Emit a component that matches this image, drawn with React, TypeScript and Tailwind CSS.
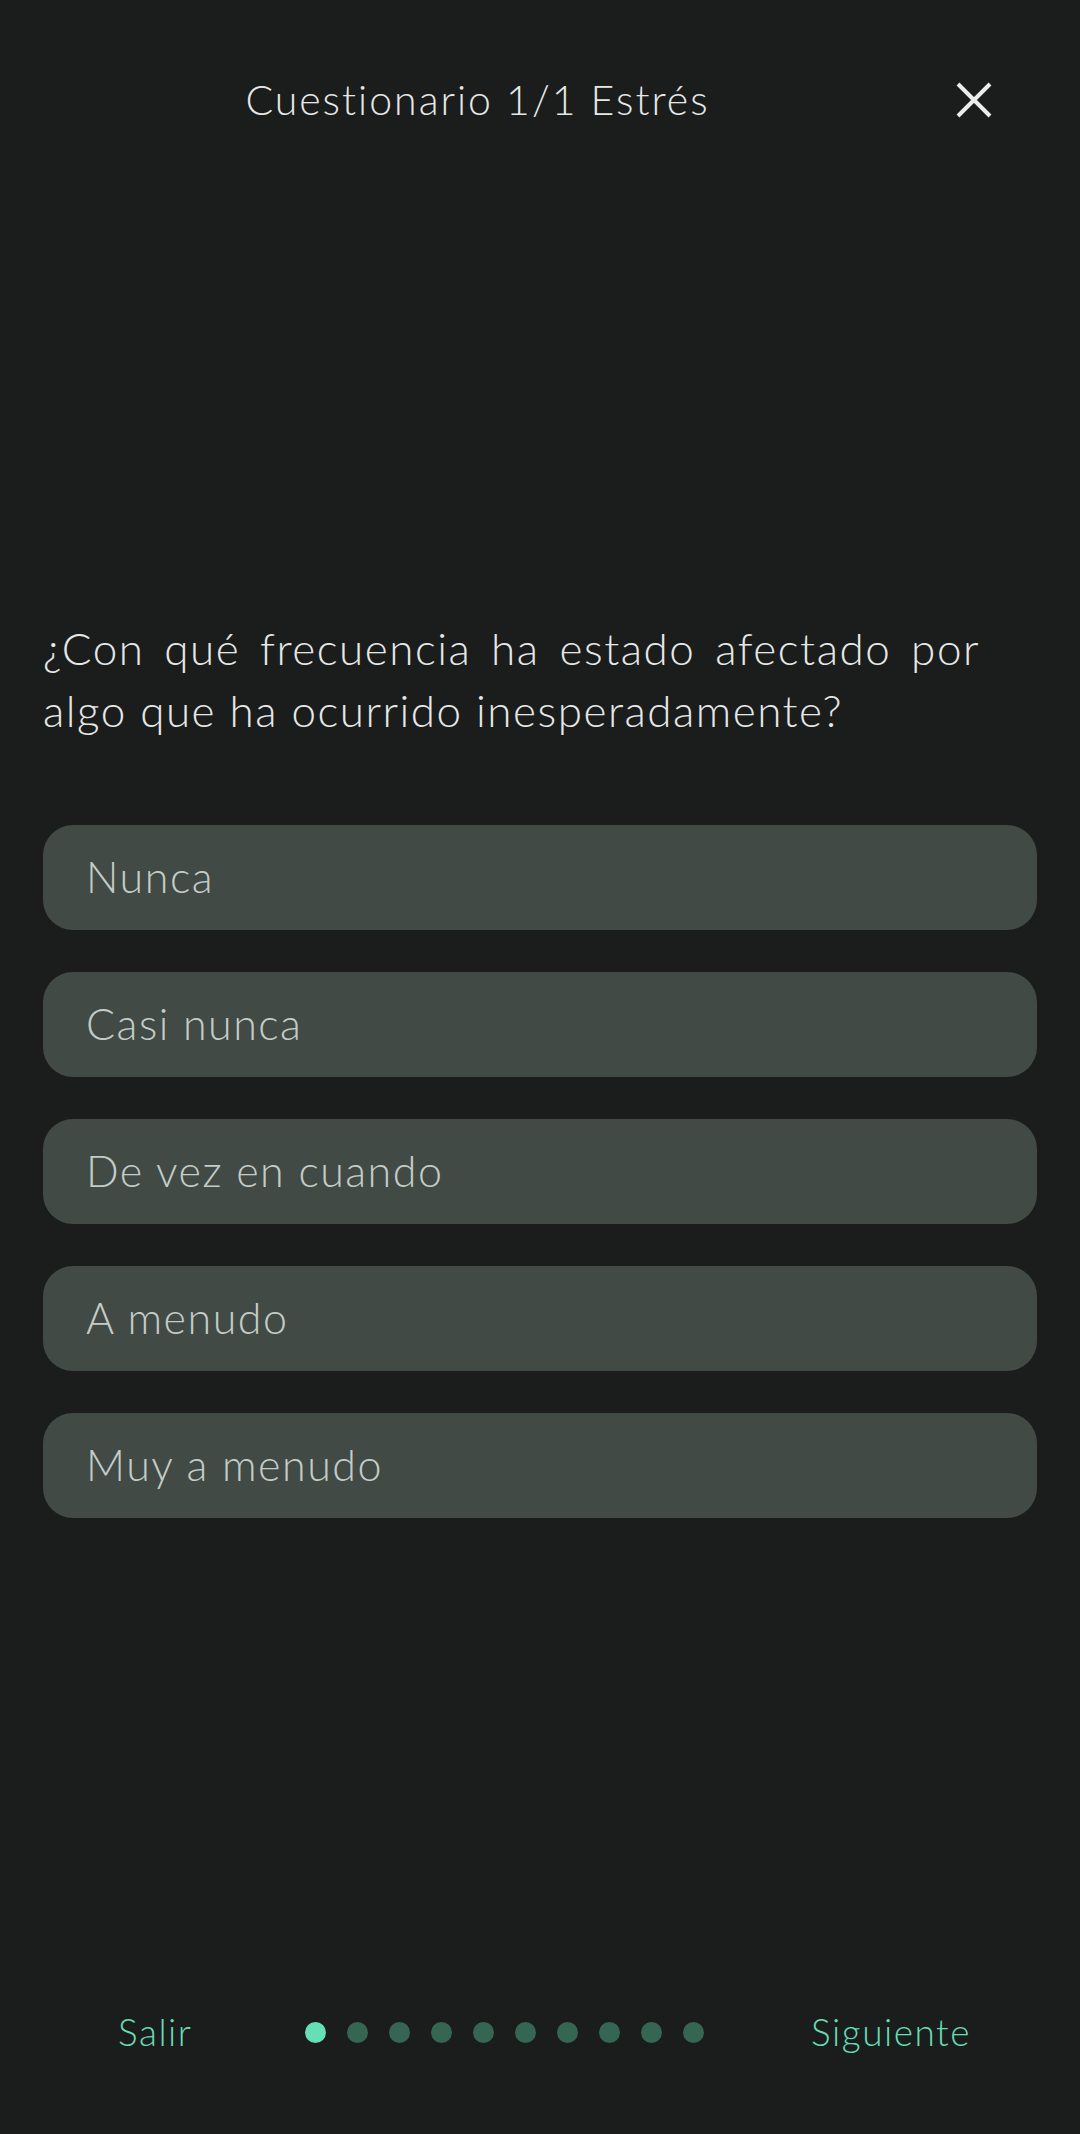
const options = ['Nunca', 'Casi nunca', 'De vez en cuando', 'A menudo', 'Muy a menudo']

export default function App (): JSX.Element {
  const dots = Array.from({ length: 10 }, (_, i) => i)
  return (
    <main className="flex min-h-[2134px] w-[1080px] flex-col bg-[#1b1c1c] font-['Lato',sans-serif] font-light text-[#e6e8e7]">
      <header className="flex h-[200px] items-center pr-[87px]">
        <h1 className="flex-1 text-center text-[41px] font-light tracking-[2px]">Cuestionario 1/1 Estrés</h1>
        <button className="text-[#ececec]" aria-label="Cerrar">
          <svg width="38" height="38" viewBox="0 0 38 38" fill="none" stroke="currentColor" strokeWidth="4" strokeLinecap="butt">
            <path d="M3 3 L35 35 M35 3 L3 35" />
          </svg>
        </button>
      </header>

      <p className="mt-[417px] pl-[43px] pr-[100px] text-justify text-[44px] leading-[62px] tracking-[1.5px]">
        ¿Con qué frecuencia ha estado afectado por algo que ha ocurrido inesperadamente?
      </p>

      <div className="mt-[84px] flex flex-col gap-[42px] px-[43px]">
        {options.map((option) => (
          <button
            key={option}
            className="flex h-[105px] items-center rounded-[30px] bg-[#414a45] pl-[43px] text-left text-[43px] font-light tracking-[1.5px] text-[#c4ccc7]"
          >
            {option}
          </button>
        ))}
      </div>

      <footer className="mb-[52px] mt-auto flex h-[100px] items-center">
        <span className="ml-[118px] w-[73px] text-[37px] font-light tracking-[1.5px] text-[#66dcb5]">Salir</span>
        <div className="ml-[114px] flex gap-[21px]">
          {dots.map((i) => (
            <span key={i} className={`h-[21px] w-[21px] rounded-full ${i === 0 ? 'bg-[#66dfb7]' : 'bg-[#356654]'}`} />
          ))}
        </div>
        <span className="ml-[107px] text-[37px] font-light tracking-[1.5px] text-[#66dcb5]">Siguiente</span>
      </footer>
    </main>
  )
}
